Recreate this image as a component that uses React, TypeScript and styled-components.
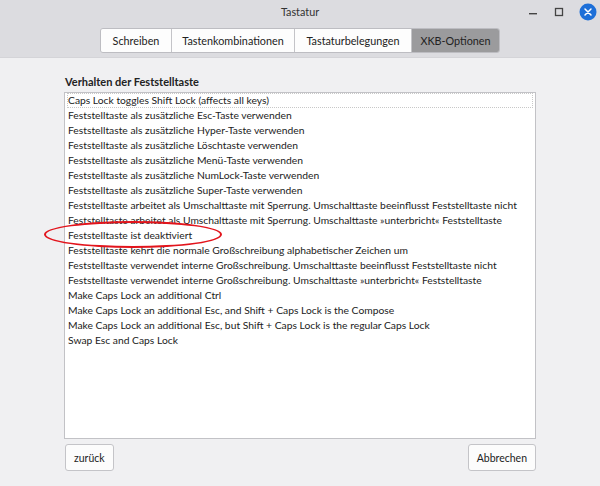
import React from "react";
import styled, { createGlobalStyle } from "styled-components";

const Global = createGlobalStyle`
  html, body { margin: 0; padding: 0; }
  body { font-family: Lato, "Noto Sans", sans-serif; background: #f0f0f2; color: #222; }
  #root { width: 600px; height: 486px; }
`;

const Window = styled.div`
  width: 600px;
  height: 486px;
  display: flex;
  flex-direction: column;
  background: #f0f0f2;
  position: relative;
  overflow: hidden;
`;

const Header = styled.div`
  height: 58px;
  background: #dcdce0;
  display: flex;
  flex-direction: column;
  align-items: center;
  position: relative;
  box-sizing: border-box;
  border-bottom: 1px solid #d4d4d8;
`;

const Title = styled.div`
  font-size: 10.8px;
  line-height: 12px;
  margin-top: 6px;
  color: #333;
`;

const Controls = styled.div`
  position: absolute;
  right: 3px;
  top: 3px;
  display: flex;
  align-items: center;
  gap: 14px;
`;

const Tabs = styled.div`
  margin-top: 10px;
  display: flex;
  border: 1px solid #bdbdc2;
  border-radius: 3px;
  overflow: hidden;
  height: 25px;
  box-sizing: border-box;
`;

const Tab = styled.div<{ $active?: boolean; $w: number }>`
  width: ${(p) => p.$w}px;
  display: flex;
  align-items: center;
  justify-content: center;
  font-size: 10.8px;
  background: ${(p) => (p.$active ? "#9b9b9d" : "#fdfdfd")};
  color: #222;
  box-sizing: border-box;
  & + & { border-left: 1px solid #c4c4c8; }
`;

const Body = styled.div`
  flex: 1;
  display: flex;
  flex-direction: column;
  padding: 17px 64px 0 64px;
`;

const Heading = styled.div`
  font-size: 11px;
  font-weight: 700;
  line-height: 14px;
  padding-left: 1px;
  margin-bottom: 3px;
  color: #222;
`;

const List = styled.div`
  height: 347px;
  background: #fff;
  border: 1px solid #c2c2c6;
  box-sizing: border-box;
  padding: 0 2px;
`;

const Row = styled.div<{ $focus?: boolean }>`
  height: 15px;
  line-height: 13px;
  font-size: 10.3px;
  padding-left: 0;
  box-sizing: border-box;
  white-space: nowrap;
  color: #222;
  border: 1px dotted ${(p) => (p.$focus ? "#c8c8c8" : "transparent")};
`;

const Footer = styled.div`
  display: flex;
  justify-content: space-between;
  margin-top: 5px;
  padding-left: 1px;
`;

const Button = styled.div`
  height: 27px;
  padding: 0 8px;
  display: flex;
  align-items: center;
  font-size: 10.5px;
  background: #fcfcfc;
  border: 1px solid #c4c4c8;
  border-radius: 3px;
  box-sizing: border-box;
  color: #222;
`;

const Ellipse = styled.div`
  position: absolute;
  left: 44px;
  top: 221px;
  width: 178px;
  height: 27px;
  border: 2.5px solid #e2141c;
  border-radius: 50%;
  box-sizing: border-box;
  pointer-events: none;
`;

const items = [
  "Caps Lock toggles Shift Lock (affects all keys)",
  "Feststelltaste als zusätzliche Esc-Taste verwenden",
  "Feststelltaste als zusätzliche Hyper-Taste verwenden",
  "Feststelltaste als zusätzliche Löschtaste verwenden",
  "Feststelltaste als zusätzliche Menü-Taste verwenden",
  "Feststelltaste als zusätzliche NumLock-Taste verwenden",
  "Feststelltaste als zusätzliche Super-Taste verwenden",
  "Feststelltaste arbeitet als Umschalttaste mit Sperrung. Umschalttaste beeinflusst Feststelltaste nicht",
  "Feststelltaste arbeitet als Umschalttaste mit Sperrung. Umschalttaste »unterbricht« Feststelltaste",
  "Feststelltaste ist deaktiviert",
  "Feststelltaste kehrt die normale Großschreibung alphabetischer Zeichen um",
  "Feststelltaste verwendet interne Großschreibung. Umschalttaste beeinflusst Feststelltaste nicht",
  "Feststelltaste verwendet interne Großschreibung. Umschalttaste »unterbricht« Feststelltaste",
  "Make Caps Lock an additional Ctrl",
  "Make Caps Lock an additional Esc, and Shift + Caps Lock is the Compose",
  "Make Caps Lock an additional Esc, but Shift + Caps Lock is the regular Caps Lock",
  "Swap Esc and Caps Lock",
];

export default function App() {
  return (
    <>
      <Global />
      <Window>
        <Header>
          <Title>Tastatur</Title>
          <Controls>
            <svg width="12" height="12" viewBox="0 0 12 12">
              <rect x="2" y="7" width="8" height="1.4" fill="#444" />
            </svg>
            <svg width="12" height="12" viewBox="0 0 12 12">
              <rect x="2.5" y="2.5" width="7" height="7" fill="none" stroke="#444" strokeWidth="1.3" />
            </svg>
            <svg width="18" height="18" viewBox="0 0 18 18">
              <circle cx="9" cy="9" r="8.5" fill="#1d6fd8" />
              <path d="M6 6 L12 12 M12 6 L6 12" stroke="#fff" strokeWidth="1.5" strokeLinecap="round" />
            </svg>
          </Controls>
          <Tabs>
            <Tab $w={70}>Schreiben</Tab>
            <Tab $w={123}>Tastenkombinationen</Tab>
            <Tab $w={117}>Tastaturbelegungen</Tab>
            <Tab $w={88} $active>XKB-Optionen</Tab>
          </Tabs>
        </Header>
        <Body>
          <Heading>Verhalten der Feststelltaste</Heading>
          <List>
            {items.map((t, i) => (
              <Row key={i} $focus={i === 0}>{t}</Row>
            ))}
          </List>
          <Footer>
            <Button>zurück</Button>
            <Button>Abbrechen</Button>
          </Footer>
        </Body>
        <Ellipse />
      </Window>
    </>
  );
}
